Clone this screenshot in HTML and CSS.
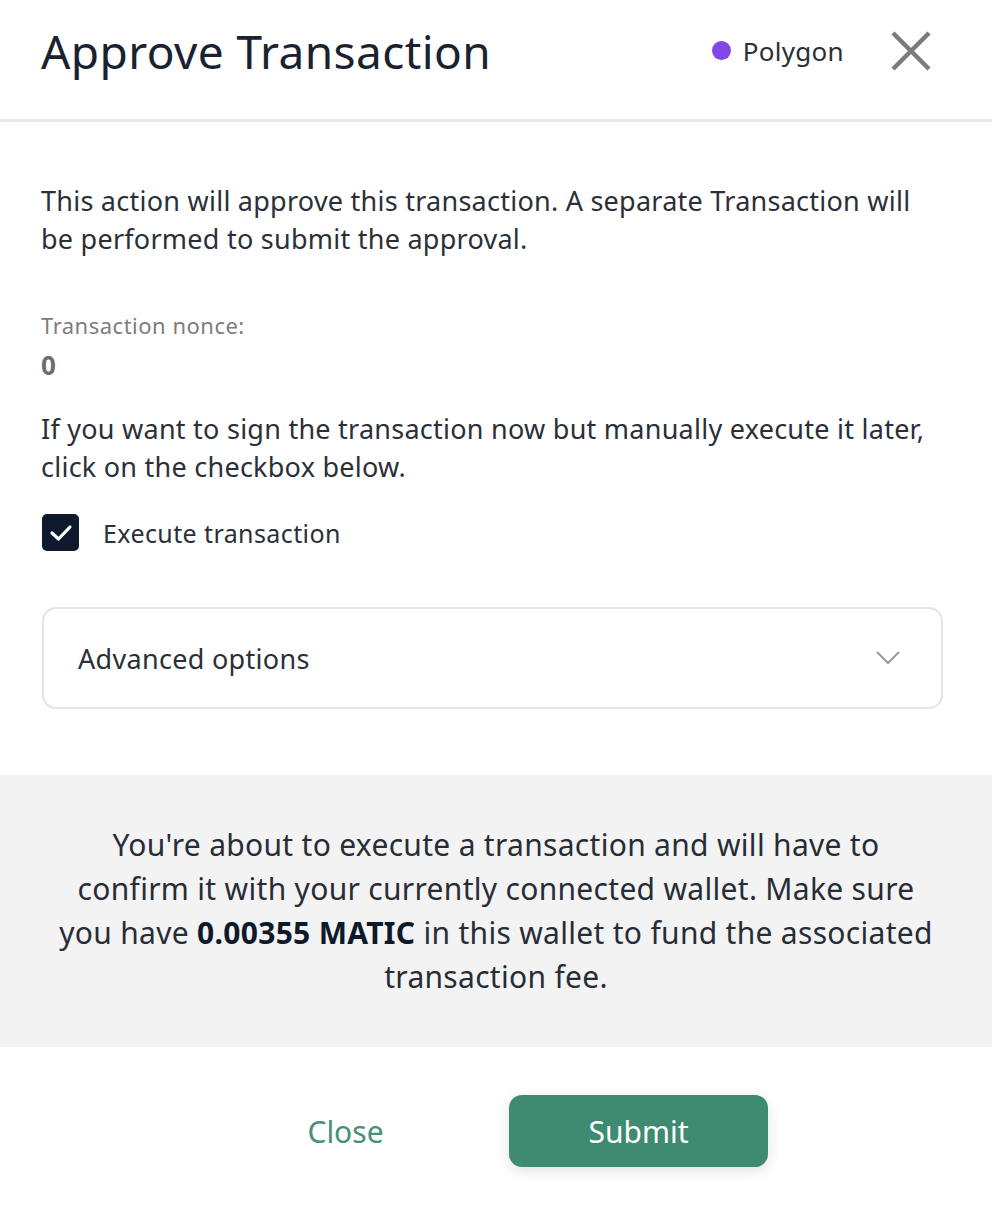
FILE: index.html
```html
<!DOCTYPE html>
<html lang="en">
<head>
<meta charset="utf-8">
<link rel="stylesheet" href="styles.css">
<title>Approve Transaction</title>
</head>
<body>
<div class="modal">
  <header class="header">
    <h1 class="title">Approve Transaction</h1>
    <div class="header-right">
      <div class="network"><span class="dot"></span><span>Polygon</span></div>
      <button class="close-x" aria-label="Close">
        <svg width="42" height="42" viewBox="0 0 42 42"><path d="M3 3 L39 39 M39 3 L3 39" stroke="#7b7b7b" stroke-width="4.5" stroke-linecap="butt" fill="none"/></svg>
      </button>
    </div>
  </header>
  <section class="body">
    <p class="text intro">This action will approve this transaction. A separate Transaction will be performed to submit the approval.</p>
    <div class="nonce">
      <div class="nonce-label">Transaction nonce:</div>
      <div class="nonce-value">0</div>
    </div>
    <p class="text">If you want to sign the transaction now but manually execute it later, click on the checkbox below.</p>
    <label class="check">
      <span class="box"><svg width="24" height="20" viewBox="0 0 24 20"><path d="M3 10 L9.5 16 L21 4" stroke="#fff" stroke-width="3.2" fill="none" stroke-linecap="round" stroke-linejoin="round"/></svg></span>
      <span class="check-label">Execute transaction</span>
    </label>
    <div class="advanced">
      <span>Advanced options</span>
      <svg width="26" height="16" viewBox="0 0 26 16"><path d="M2 2 L13 13 L24 2" stroke="#9a9a9a" stroke-width="2" fill="none"/></svg>
    </div>
  </section>
  <section class="notice">
    <p>You're about to execute a transaction and will have to confirm it with your currently connected wallet. Make sure you have <b>0.00355 MATIC</b> in this wallet to fund the associated transaction fee.</p>
  </section>
  <footer class="footer">
    <button class="btn btn-text">Close</button>
    <button class="btn btn-primary">Submit</button>
  </footer>
</div>
</body>
</html>
```

FILE: styles.css
```css
* { box-sizing: border-box; }
html, body { margin: 0; padding: 0; background: #fff; }
body {
  font-family: "Noto Sans", "Liberation Sans", sans-serif;
  color: #1d2530;
  width: 992px;
  height: 1206px;
  overflow: hidden;
}
.modal { display: flex; flex-direction: column; }
.header {
  height: 122px;
  display: flex;
  align-items: center;
  justify-content: space-between;
  padding: 0 60px 18px 41px;
  border-bottom: 3px solid #e9e9e9;
}
.title {
  margin: 0;
  font-weight: 400;
  font-size: 46px;
  letter-spacing: 0.4px;
  color: #1a2230;
}
.header-right { display: flex; align-items: center; gap: 46px; }
.network { display: flex; align-items: center; gap: 12px; font-size: 26px; letter-spacing: 0.3px; color: #2a2f38; }
.dot { width: 19px; height: 19px; border-radius: 50%; background: #8247e5; }
.close-x { border: 0; background: none; padding: 0; display: flex; }
.body { padding: 60px 49px 66px 41px; }
.text { margin: 0; font-size: 27px; line-height: 38px; letter-spacing: 0.25px; color: #2b3038; }
.nonce { margin: 52px 0 27px; }
.nonce-label { font-size: 22px; letter-spacing: 0.5px; color: #7d7d7d; line-height: 30px; }
.nonce-value { font-size: 26px; font-weight: 700; color: #6b6b6b; line-height: 36px; margin-top: 7px; }
.check { display: flex; align-items: center; gap: 24px; margin-top: 28px; margin-left: 1px; }
.box {
  width: 37px; height: 37px; border-radius: 5px; background: #0e1a2b;
  display: flex; align-items: center; justify-content: center;
}
.check-label { font-size: 25px; letter-spacing: 0.4px; color: #2b3038; }
.advanced {
  margin-top: 56px;
  margin-left: 1px;
  height: 102px;
  border: 2px solid #e4e4e4;
  border-radius: 14px;
  display: flex;
  align-items: center;
  justify-content: space-between;
  padding: 0 40px 0 34px;
  font-size: 27px;
  letter-spacing: 0.3px;
  color: #2b3038;
}
.notice {
  background: #f4f3f3;
  height: 272px;
  display: flex;
  align-items: center;
  justify-content: center;
  padding: 0 55px;
}
.notice p { margin: 0; text-align: center; font-size: 30px; line-height: 44px; letter-spacing: 0.3px; color: #272d36; }
.notice b { font-weight: 700; color: #0e1a2b; }
.footer {
  height: 160px;
  display: flex;
  align-items: flex-start;
  justify-content: center;
  gap: 34px;
  padding: 48px 8px 0 0;
}
.btn {
  width: 259px; height: 72px; border: 0; border-radius: 13px;
  font-family: inherit; font-size: 30px; cursor: pointer;
}
.btn-text { background: none; color: #4a8f77; }
.btn-primary { background: #3f8b72; color: #fff; box-shadow: 0 4px 14px rgba(0,0,0,0.12); }
```
